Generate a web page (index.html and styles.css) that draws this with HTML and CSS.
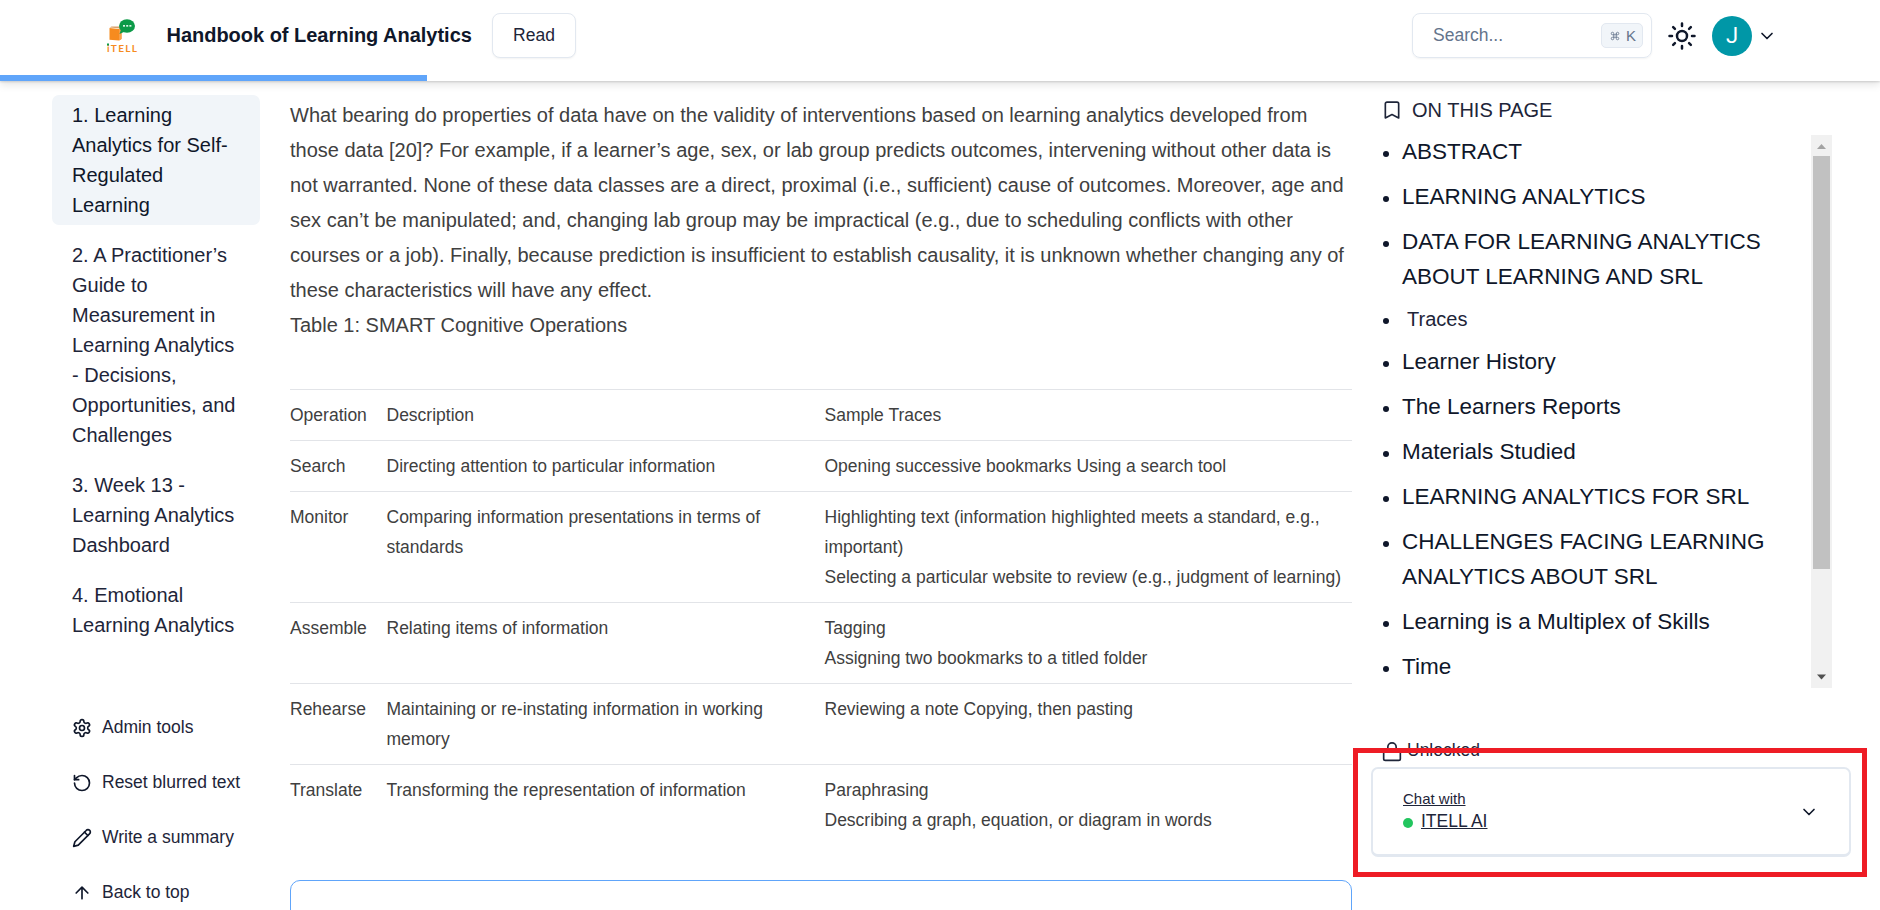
FILE: index.html
```html
<!DOCTYPE html>
<html lang="en">
<head>
<meta charset="utf-8">
<title>Handbook of Learning Analytics</title>
<link rel="stylesheet" href="styles.css">
</head>
<body>
<header class="header">
  <div class="header-row">
    <svg class="logo" viewBox="0 0 32 36" width="32" height="36">
      <path d="M3.500 9.500l2-1h10l-.5 2z" fill="#d9a06a"/>
      <path d="M3.500 10l9.500 1 2.500-1.500v11.500l-2.500 1.500-9.500-.8z" fill="#f68b1f"/>
      <path d="M13 11l2.500-1.500v11.500l-2.500 1.500z" fill="#f9a04a"/>
      <path d="M15 11.500l-1.500 4.500 5.500-2.500z" fill="#0c9a48"/>
      <ellipse cx="21" cy="8" rx="8" ry="6.700" fill="#0c9a48"/>
      <g fill="#d9f2e3"><rect x="17" y="7" width="2" height="1.700"/><rect x="20.200" y="7" width="2" height="1.700"/><rect x="23.400" y="7" width="2" height="1.700"/></g>
      <text class="logo-text" x="1" y="33.500" textLength="30">iTELL</text>
      <rect x="1" y="25.500" width="2" height="2" fill="#0c9a48"/>
    </svg>
    <div class="brand">Handbook of Learning Analytics</div>
    <button class="btn-read">Read</button>
    <div class="search"><span>Search...</span><kbd class="kbd"><svg class="stroke" viewBox="0 0 24 24" width="12" height="12"><path d="M15 6v12a3 3 0 1 0 3-3H6a3 3 0 1 0 3 3V6a3 3 0 1 0-3 3h12a3 3 0 1 0-3-3"/></svg>K</kbd></div>
    <svg class="stroke sun" viewBox="0 0 24 24" width="30" height="30"><circle cx="12" cy="12" r="4"/><path d="M12 2v2M12 20v2M4.930 4.930l1.410 1.410M17.660 17.660l1.410 1.410M2 12h2M20 12h2M6.340 17.660l-1.410 1.410M19.070 4.930l-1.410 1.410"/></svg>
    <div class="avatar">J</div>
    <svg class="stroke" viewBox="0 0 24 24" width="20" height="20"><path d="M6 9l6 6 6-6"/></svg>
  </div>
  <div class="progress"></div>
</header>

<div class="page">
  <aside class="sidebar">
    <nav class="chapters">
      <a class="chapter active">1. Learning Analytics for Self-Regulated Learning</a>
      <a class="chapter">2. A Practitioner’s Guide to Measurement in Learning Analytics - Decisions, Opportunities, and Challenges</a>
      <a class="chapter">3. Week 13 - Learning Analytics Dashboard</a>
      <a class="chapter">4. Emotional Learning Analytics</a>
    </nav>
    <div class="actions">
      <a class="action"><svg class="stroke" viewBox="0 0 24 24" width="20" height="20"><path d="M12.220 2h-.44a2 2 0 0 0-2 2v.18a2 2 0 0 1-1 1.730l-.43.25a2 2 0 0 1-2 0l-.15-.08a2 2 0 0 0-2.730.73l-.22.38a2 2 0 0 0 .73 2.730l.15.1a2 2 0 0 1 1 1.720v.51a2 2 0 0 1-1 1.740l-.15.09a2 2 0 0 0-.73 2.730l.22.38a2 2 0 0 0 2.730.73l.15-.08a2 2 0 0 1 2 0l.43.25a2 2 0 0 1 1 1.730V20a2 2 0 0 0 2 2h.44a2 2 0 0 0 2-2v-.18a2 2 0 0 1 1-1.730l.43-.25a2 2 0 0 1 2 0l.15.08a2 2 0 0 0 2.730-.73l.22-.39a2 2 0 0 0-.73-2.730l-.15-.08a2 2 0 0 1-1-1.740v-.5a2 2 0 0 1 1-1.740l.15-.09a2 2 0 0 0 .73-2.730l-.22-.38a2 2 0 0 0-2.730-.73l-.15.08a2 2 0 0 1-2 0l-.43-.25a2 2 0 0 1-1-1.730V4a2 2 0 0 0-2-2z"/><circle cx="12" cy="12" r="3"/></svg>Admin tools</a>
      <a class="action"><svg class="stroke" viewBox="0 0 24 24" width="20" height="20"><path d="M3 12a9 9 0 1 0 9-9 9.750 9.750 0 0 0-6.740 2.740L3 8"/><path d="M3 3v5h5"/></svg>Reset blurred text</a>
      <a class="action"><svg class="stroke" viewBox="0 0 24 24" width="20" height="20"><path d="M17 3a2.850 2.830 0 1 1 4 4L7.500 20.500 2 22l1.500-5.500Z"/><path d="M15 5l4 4"/></svg>Write a summary</a>
      <a class="action"><svg class="stroke" viewBox="0 0 24 24" width="20" height="20"><path d="M5 12l7-7 7 7M12 19V5"/></svg>Back to top</a>
    </div>
  </aside>

  <main class="content">
    <p>What bearing do properties of data have on the validity of interventions based on learning analytics developed from those data [20]? For example, if a learner’s age, sex, or lab group predicts outcomes, intervening without other data is not warranted. None of these data classes are a direct, proximal (i.e., sufficient) cause of outcomes. Moreover, age and sex can’t be manipulated; and, changing lab group may be impractical (e.g., due to scheduling conflicts with other courses or a job). Finally, because prediction is insufficient to establish causality, it is unknown whether changing any of these characteristics will have any effect.</p>
    <p>Table 1: SMART Cognitive Operations</p>
    <table class="ops">
      <tr><td class="c-op">Operation</td><td class="c-desc">Description</td><td>Sample Traces</td></tr>
      <tr><td>Search</td><td>Directing attention to particular information</td><td>Opening successive bookmarks Using a search tool</td></tr>
      <tr><td>Monitor</td><td>Comparing information presentations in terms of standards</td><td>Highlighting text (information highlighted meets a standard, e.g., important)<br>Selecting a particular website to review (e.g., judgment of learning)</td></tr>
      <tr><td>Assemble</td><td>Relating items of information</td><td>Tagging<br>Assigning two bookmarks to a titled folder</td></tr>
      <tr><td>Rehearse</td><td>Maintaining or re-instating information in working memory</td><td>Reviewing a note Copying, then pasting</td></tr>
      <tr><td>Translate</td><td>Transforming the representation of information</td><td>Paraphrasing<br>Describing a graph, equation, or diagram in words</td></tr>
    </table>
    <div class="question"></div>
  </main>

  <aside class="toc">
    <div class="toc-title"><svg class="stroke" viewBox="0 0 24 24" width="20" height="20"><path d="M20 21.500l-8-4-8 4V4.500a2 2 0 0 1 2-2h12a2 2 0 0 1 2 2v17z"/></svg>ON THIS PAGE</div>
    <div class="toc-scroll">
      <ul class="toc-list">
        <li>ABSTRACT</li>
        <li>LEARNING ANALYTICS</li>
        <li>DATA FOR LEARNING ANALYTICS ABOUT LEARNING AND SRL</li>
        <li class="sub">Traces</li>
        <li>Learner History</li>
        <li>The Learners Reports</li>
        <li>Materials Studied</li>
        <li>LEARNING ANALYTICS FOR SRL</li>
        <li>CHALLENGES FACING LEARNING ANALYTICS ABOUT SRL</li>
        <li>Learning is a Multiplex of Skills</li>
        <li>Time</li>
      </ul>
      <div class="scrollbar">
        <svg viewBox="0 0 21 21" width="21" height="21"><path d="M6 14l4.500-5 4.500 5z" fill="#a3a3a3"/></svg>
        <div class="thumb"></div>
        <svg class="down" viewBox="0 0 21 21" width="21" height="21"><path d="M6 7.500h9l-4.500 5z" fill="#505050"/></svg>
      </div>
    </div>
    <div class="unlocked"><svg class="stroke" viewBox="0 0 24 24" width="20" height="20"><path d="M2 10v10a2 2 0 0 0 2 2h16a2 2 0 0 0 2-2V10zM7 10V6a5 5 0 0 1 10 0v4"/></svg>Unlocked</div>
    <div class="chat">
      <div class="chat-label">
        <div class="chat-small">Chat with</div>
        <div class="chat-name"><span class="dot"></span><span class="name">ITELL AI</span></div>
      </div>
      <svg class="stroke" viewBox="0 0 24 24" width="20" height="20"><path d="M6 9l6 6 6-6"/></svg>
    </div>
  </aside>
</div>
<div class="callout"></div>
</body>
</html>
```
FILE: styles.css
```css
* { box-sizing: border-box; }
body {
  margin: 0;
  height: 910px;
  overflow: hidden;
  position: relative;
  background: #fff;
  color: #0f172a;
  font-family: "Liberation Sans", Arial, sans-serif;
}
svg { display: block; flex: none; }
.stroke { fill: none; stroke: currentColor; stroke-width: 2; stroke-linecap: round; stroke-linejoin: round; }

.header { height: 81px; background: #fff; box-shadow: 0 1px 2px rgba(0,0,0,.14), 0 4px 8px rgba(0,0,0,.1); }
.header-row { display: flex; align-items: center; height: 75px; padding: 0 103px 4px 106px; }
.logo-text { font: 700 10px Lato, sans-serif; fill: #f68b1f; }
.brand { margin-left: 28.500px; width: 325.500px; font-size: 20px; font-weight: 700; letter-spacing: -.02px; white-space: nowrap; }
.btn-read {
  width: 84px; height: 45px; padding: 0;
  border: 1px solid #e2e8f0; border-radius: 8px; background: #fff;
  box-shadow: 0 1px 2px rgba(0,0,0,.05);
  font: 17.500px "Liberation Sans", Arial, sans-serif; color: #1e2539;
}
.search {
  display: flex; align-items: center; justify-content: space-between;
  margin-left: 836px; width: 240px; height: 45px; padding: 0 8px 0 20px;
  border: 1px solid #e2e8f0; border-radius: 8px;
  box-shadow: 0 1px 2px rgba(0,0,0,.05);
  font-size: 17.500px; color: #64748b;
}
.kbd {
  display: flex; align-items: center; gap: 6px;
  height: 25px; width: 42px; padding: 0 7px 0 8px;
  border: 1px solid #e2e8f0; border-radius: 5px; background: #f1f5f9;
  font: 15px "Liberation Sans", Arial, sans-serif;
}
.kbd svg { width: 10px; height: 10px; }
.sun { margin: 0 15px; }
.avatar {
  display: flex; align-items: center; justify-content: center;
  width: 40px; height: 40px; margin-right: 5px; border-radius: 50%;
  background: #0097a7; color: #fff; font: 22px Roboto, sans-serif;
}
.progress { width: 427px; height: 6px; background: #60a5fa; }

.page { display: grid; grid-template-columns: 208px 1062px 480px; padding-left: 52px; column-gap: 30px; }

.sidebar { padding-top: 14px; }
.chapters { display: flex; flex-direction: column; gap: 10px; }
.chapter { padding: 5px 20px; border-radius: 7px; font-size: 20px; line-height: 30px; color: #1e2539; }
.chapter.active { background: #f1f5f9; color: #0f172a; }
.actions { display: flex; flex-direction: column; gap: 25px; margin: 67px 0 0 20px; }
.action { display: flex; align-items: center; gap: 10px; height: 30px; font-size: 17.500px; color: #1e2539; white-space: nowrap; }
.action svg { color: #0f172a; position: relative; top: 1px; }

.content { padding-top: 17px; color: #404040; }
.content p { margin: 0; font-size: 20px; line-height: 35px; }
.ops { width: 1062px; margin-top: 46px; border-collapse: collapse; table-layout: fixed; font-size: 17.500px; line-height: 30px; }
.ops td { padding: 10px 10px; vertical-align: top; border-top: 1px solid #e2e4e8; }
.ops td:first-child { padding-left: 0; }
.ops td:last-child { padding-right: 0; }
.c-op { width: 86.500px; }
.c-desc { width: 438px; }
.question { height: 60px; margin-top: 35px; border: 1px solid #60a5fa; border-radius: 10px; }

.toc { padding-top: 14px; margin-left: -11px; }
.toc-title { display: flex; align-items: center; gap: 10px; height: 30px; padding-left: 11px; font-size: 20px; color: #1e2539; }
.toc-scroll { display: flex; justify-content: space-between; width: 461px; height: 553px; margin-top: 10px; overflow: hidden; }
.toc-list { width: 405px; margin: -1px 0 0; padding: 0 0 0 31px; font-size: 22.500px; line-height: 35px; list-style: none; }
.toc-list li { margin-bottom: 10px; }
.toc-list li::before {
  content: ""; float: left; width: 6px; height: 6px; margin: 17px 0 0 -19px;
  border-radius: 50%; background: #0f172a;
}
.toc-list .sub { padding-left: 5px; font-size: 20px; line-height: 30px; color: #1e2539; }
.toc-list .sub::before { margin: 14px 0 0 -24px; }
.scrollbar { display: flex; flex-direction: column; width: 21px; background: #f1f1f1; }
.thumb { height: 413px; margin: 0 2px; background: #c1c1c1; }
.down { margin-top: auto; }
.unlocked { display: flex; align-items: center; gap: 5px; height: 30px; margin-top: 47px; padding-left: 11px; font-size: 17.500px; color: #1e2539; }
.unlocked svg { position: relative; top: 2px; }
.chat {
  display: flex; align-items: center; justify-content: space-between;
  width: 480px; height: 90px; margin-top: 2px; padding: 0 30px;
  border: 2px solid #e2e8f0; border-bottom-width: 3px; border-radius: 7px;
}
.chat-small { font-size: 15px; line-height: 20px; text-decoration: underline; color: #1e2539; }
.chat-name { display: flex; align-items: center; gap: 8px; font-size: 17.500px; line-height: 25px; color: #1e2539; }
.name { text-decoration: underline; }
.dot { width: 10px; height: 10px; border-radius: 50%; background: #22c55e; position: relative; top: 1px; }

/* annotation frame drawn over the chat widget */
.callout { position: absolute; left: 1353px; top: 748px; width: 514px; height: 129px; border: 5px solid #ee1c25; }
```
